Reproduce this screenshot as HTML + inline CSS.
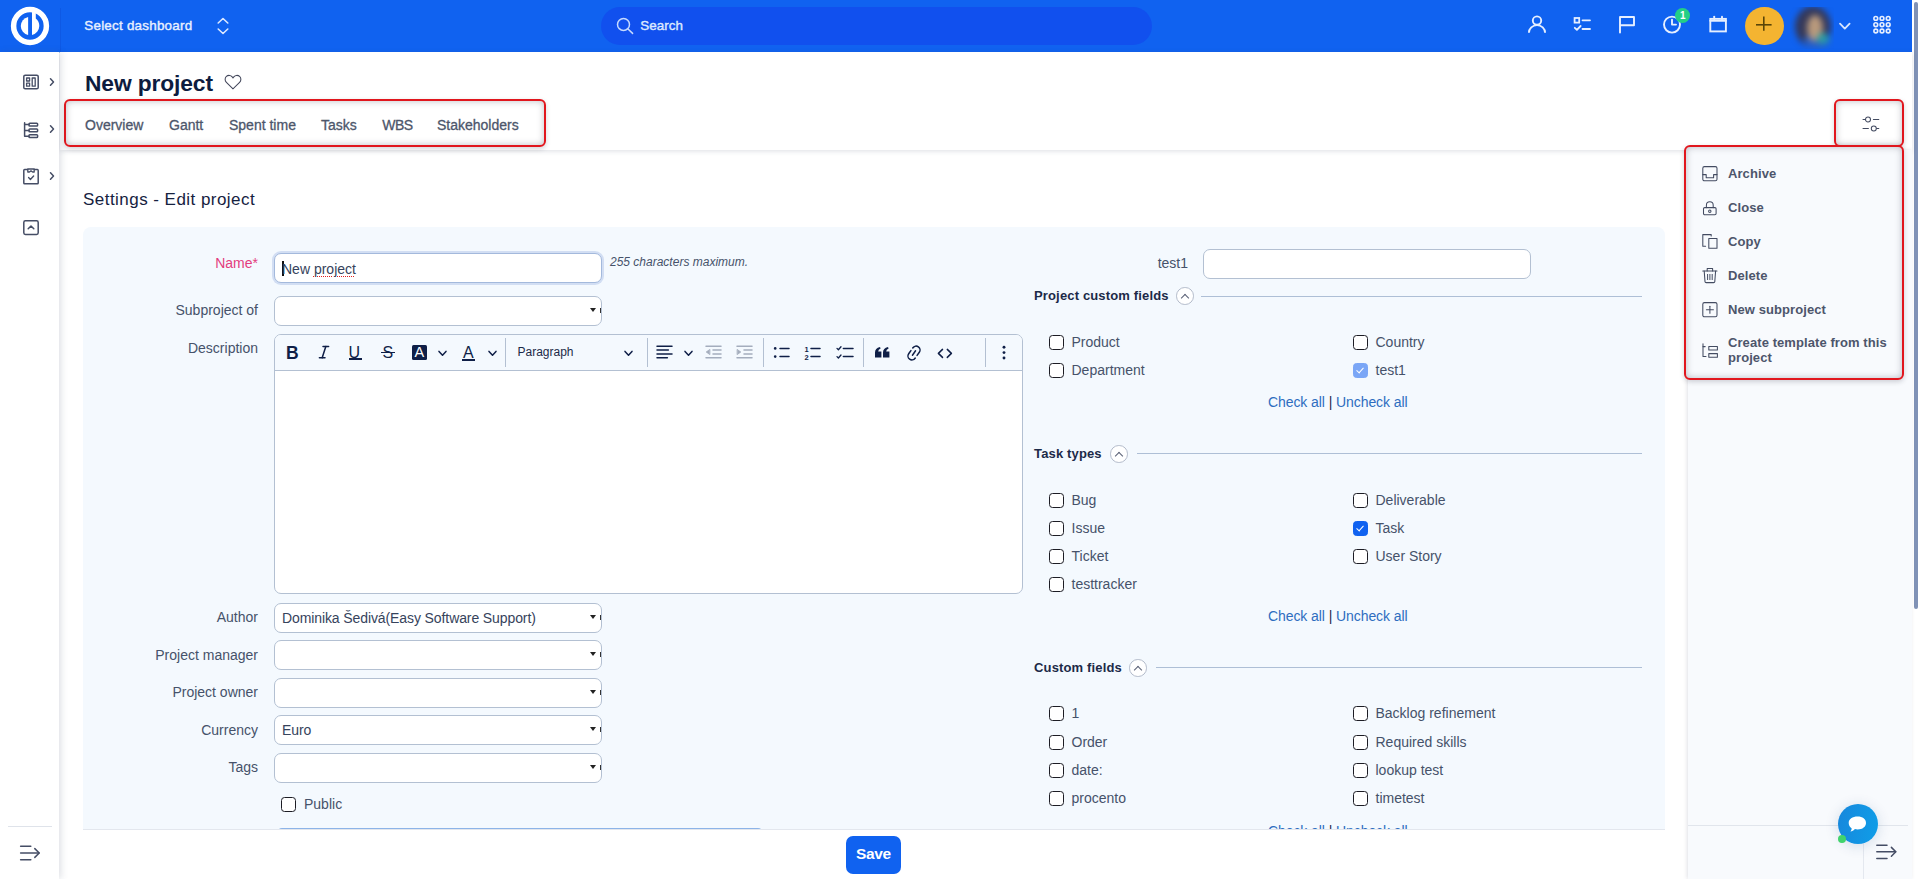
<!DOCTYPE html>
<html lang="en">
<head>
<meta charset="utf-8">
<title>New project - Settings</title>
<style>
*{box-sizing:border-box;margin:0;padding:0}
html,body{width:1920px;height:879px;overflow:hidden;background:#fff;font-family:"Liberation Sans",sans-serif;color:#46526a;font-size:14px}
.abs{position:absolute}
svg{position:absolute;overflow:visible}
.t{position:absolute;white-space:nowrap;line-height:1}
/* top bar */
#top{position:absolute;left:0;top:0;width:1912px;height:52px;background:#1062f0}
#top .div{position:absolute;left:60px;top:8px;width:1px;height:44px;background:rgba(10,60,190,.22)}
#search{position:absolute;left:601px;top:7px;width:551px;height:38px;border-radius:19px;background:#1150ee}
.w{color:#fff}
/* sidebar */
#side{position:absolute;left:0;top:52px;width:59px;height:827px;background:#fff;box-shadow:2px 0 7px rgba(60,70,100,.17)}
/* header */
#head{position:absolute;left:60px;top:52px;width:1852px;height:98px;background:#fff;box-shadow:0 1px 5px rgba(60,70,100,.18)}
.tab{position:absolute;top:118px;font-size:14px;color:#4d566b;white-space:nowrap;line-height:1;-webkit-text-stroke:.3px #4d566b}
.red{position:absolute;border:2.2px solid #e1161d;border-radius:6px;box-shadow:0 2px 5px rgba(40,40,60,.2),inset 0 0 7px rgba(40,40,60,.3)}

#avatar{overflow:hidden}
#avatar i{position:absolute;display:block;border-radius:50%}
#avatar .bl{position:absolute;left:0;top:0;width:100%;height:100%;filter:blur(3.2px)}
.sic{fill:none;stroke:#454d65;stroke-width:1.5;stroke-linecap:round;stroke-linejoin:round}

/* right panel */
#rp{position:absolute;left:1688px;top:150px;width:224px;height:729px;background:#f8fafd;box-shadow:-1px 0 4px rgba(60,70,100,.16)}
.mi{position:absolute;left:1728px;font-size:13px;font-weight:bold;color:#4d556b;white-space:nowrap;line-height:15px;letter-spacing:.08px}
.mic{fill:none;stroke:#434b61;stroke-width:1.05;stroke-linecap:round;stroke-linejoin:round}
/* form */
#h2{left:83px;top:190.6px;font-size:17px;letter-spacing:.46px;color:#16223f}
#panel{position:absolute;left:83px;top:227px;width:1582px;height:640px;background:#f4f9fe;border-radius:8px}
.lbl{position:absolute;width:180px;text-align:right;font-size:14px;color:#46526a;white-space:nowrap;line-height:16px;left:78px}
.inp{position:absolute;left:274px;width:328px;height:30px;border:1px solid #b3c0d2;border-radius:7px;background:#fff;font-size:14px;color:#36435c;line-height:28px;padding-left:7px;white-space:nowrap;overflow:hidden;letter-spacing:-.1px}
.inp:after{content:"";position:absolute;right:5.4px;top:11px;border:3px solid transparent;border-top:4px solid #222;border-bottom:0}
.inp b{position:absolute;right:0;top:11px;width:1.2px;height:4.6px;background:#333}
.cb{position:absolute;width:15px;height:15px;border:1.5px solid #1c1c24;border-radius:3.5px;background:#fff}
.cl{position:absolute;font-size:14px;color:#46526a;white-space:nowrap;line-height:16px}
.sec{position:absolute;left:1034px;letter-spacing:.15px;font-size:13px;font-weight:bold;color:#1c2a48;white-space:nowrap;line-height:15px}
.tog{position:absolute;width:17.6px;height:17.6px;margin-left:-.4px;border:1px solid #b4bccb;border-radius:50%;background:#fff}
.tog:after{content:"";position:absolute;left:5.3px;top:7.2px;width:5px;height:5px;border-left:1px solid #596075;border-top:1px solid #596075;transform:rotate(45deg)}
.ln{position:absolute;height:1px;background:#aebfd6}
.ca{position:absolute;left:1268px;letter-spacing:-.08px;font-size:14px;color:#2e6dc0;white-space:nowrap;line-height:16px}
.ca i{font-style:normal;color:#1c2a48}
#bottom{position:absolute;left:83px;top:829px;width:1582px;height:50px;background:#fff;border-top:1px solid #e3e7ee}
#save{position:absolute;left:846px;top:836px;width:55px;height:37.5px;border-radius:7px;background:#1062f0;color:#fff;font-size:15.5px;letter-spacing:-.35px;font-weight:bold;text-align:center;line-height:36px}

.ck{background:#1062f0;border-color:#1062f0}
.ck.dis{background:#7aa6f6;border-color:#7aa6f6}
.ck:after{content:"";position:absolute;left:4px;top:1.8px;width:3.2px;height:6px;border-right:1.8px solid #fff;border-bottom:1.8px solid #fff;transform:rotate(42deg)}
.tb{fill:none;stroke:#0f1f47;stroke-width:1.5;stroke-linecap:round;stroke-linejoin:round}
.tb.g{stroke:#a4adbd}
.tsep{position:absolute;top:338px;width:1px;height:29px;background:#b3c0d2}
.tt{position:absolute;white-space:nowrap;color:#0f1f47;line-height:1}
/* scrollbar */
#sb{position:absolute;left:1912px;top:0;width:8px;height:879px;background:#fff}
#sb i{position:absolute;left:2px;top:2px;width:4px;height:607px;border-radius:2px;background:#8092b6}
</style>
</head>
<body>
<!-- TOP BAR -->
<div id="top">
  <svg style="left:8px;top:4px" width="44" height="44" viewBox="8 4 44 44">
    <circle cx="30" cy="26" r="16.4" fill="none" stroke="#fff" stroke-width="5.5"/>
    <path d="M28.1 17 A9.2 9.2 0 0 0 28.1 35 Z" fill="#fff"/>
    <path d="M32 11.5 L35.8 11.5 L35.8 18.6 Q39.3 21.6 39.3 26 A9.3 9.3 0 0 1 32 34.9 Z" fill="#fff"/>
  </svg>
  <div class="div"></div>
  <div class="t w" id="seldash" style="left:84.3px;top:19px;font-size:13.4px;letter-spacing:.24px;-webkit-text-stroke:.4px #e9f0ff;color:#e9f0ff">Select dashboard</div>
  <svg style="left:217px;top:17px" width="12" height="18" viewBox="0 0 12 18" fill="none" stroke="#dce8ff" stroke-width="1.6" stroke-linecap="round" stroke-linejoin="round"><path d="M1.2 6 L6 1.5 L10.8 6"/><path d="M1.2 12 L6 16.5 L10.8 12"/></svg>
  <div id="search">
    <svg style="left:15px;top:10px" width="18" height="18" viewBox="0 0 18 18" fill="none" stroke="#c6daff" stroke-width="1.5" stroke-linecap="round"><circle cx="7.5" cy="7.4" r="6"/><path d="M12 12 L16.6 16.4"/></svg>
    <div class="t" id="searcht" style="left:39.2px;top:12px;font-size:13.4px;letter-spacing:.05px;-webkit-text-stroke:.4px #dde9ff;color:#dde9ff">Search</div>
  </div>

  <!-- top right icons -->
  <svg style="left:1526px;top:14px" width="22" height="22" viewBox="0 0 22 22" fill="none" stroke="#e6efff" stroke-width="1.9" stroke-linecap="round"><circle cx="11" cy="6.6" r="4.2"/><path d="M2.9 18.8 A8.1 7.7 0 0 1 19.1 18.8" stroke-linecap="butt"/></svg>
  <svg style="left:1572px;top:15px" width="20" height="18" viewBox="0 0 20 18" fill="none" stroke="#e6efff" stroke-width="1.8" stroke-linecap="round" stroke-linejoin="round"><rect x="2.6" y="3" width="4.6" height="4.6" stroke-linejoin="miter"/><path d="M10.5 5.3 H18"/><path d="M2.8 12.8 L4.9 14.8 L8.6 11"/><path d="M10.5 14 H18"/></svg>
  <svg style="left:1617px;top:14px" width="20" height="20" viewBox="0 0 20 20" fill="none" stroke="#e6efff" stroke-width="1.9" stroke-linecap="round" stroke-linejoin="round"><path d="M3 18.5 V3 H17 V11.3 H3"/></svg>
  <svg style="left:1661px;top:14px" width="22" height="22" viewBox="0 0 22 22" fill="none" stroke="#e6efff" stroke-width="1.9" stroke-linecap="round" stroke-linejoin="round"><circle cx="11" cy="10.6" r="8"/><path d="M11 5.6 V10.6 H15"/></svg>
  <div class="abs" style="left:1675px;top:8px;width:15px;height:15px;border-radius:50%;background:#23cf86"></div>
  <div class="t" style="left:1680px;top:10.5px;font-size:10px;font-weight:bold;color:#fff">1</div>
  <svg style="left:1708px;top:14px" width="20" height="20" viewBox="0 0 20 20" fill="none" stroke="#e6efff" stroke-width="1.9" stroke-linecap="round" stroke-linejoin="round"><rect x="2.3" y="4.9" width="15.6" height="12.5" stroke-linejoin="miter"/><path d="M2.3 6.7 H17.9"/><path d="M6.2 2.6 V5"/><path d="M14 2.6 V5"/></svg>
  <div class="abs" style="left:1745px;top:6.5px;width:38.5px;height:38.5px;border-radius:50%;background:#f4b431"></div>
  <svg style="left:1755.2px;top:16px" width="18" height="18" viewBox="0 0 18 18" fill="none" stroke="#5a4508" stroke-width="1.6"><path d="M1 8.8 H16.6"/><path d="M8.8 0.4 V14.8"/></svg>
  <div class="abs" id="avatar" style="left:1790px;top:6.5px;width:43.5px;height:42px"><div class="bl"><i style="left:5px;top:-1px;width:36px;height:41px;background:#343859"></i><i style="left:14px;top:26px;width:26px;height:15px;background:#2a5fc0"></i><i style="left:17px;top:8.5px;width:16px;height:26px;background:#b8997c"></i><i style="left:27px;top:26px;width:12px;height:11px;background:#2a9ca4"></i></div></div>
  <svg style="left:1838px;top:21px" width="14" height="10" viewBox="0 0 14 10" fill="none" stroke="#d8e6ff" stroke-width="1.8" stroke-linecap="round" stroke-linejoin="round"><path d="M2 2.6 L6.8 7.6 L11.6 2.6"/></svg>
  <svg style="left:1872px;top:15px" width="20" height="20" viewBox="0 0 20 20" fill="none" stroke="#e6efff" stroke-width="1.6"><circle cx="3.8" cy="3.4" r="1.9"/><circle cx="10" cy="3.4" r="1.9"/><circle cx="16.2" cy="3.4" r="1.9"/><circle cx="3.8" cy="9.7" r="1.9"/><circle cx="10" cy="9.7" r="1.9"/><circle cx="16.2" cy="9.7" r="1.9"/><circle cx="3.8" cy="16" r="1.9"/><circle cx="10" cy="16" r="1.9"/><circle cx="16.2" cy="16" r="1.9"/></svg>
</div>
<div class="abs" style="left:0;top:52px;width:1912px;height:1px;background:rgba(16,98,240,.32)"></div>
<div id="sb"><i></i></div>

<!-- HEADER -->
<div id="head"></div>
<div class="t" id="title" style="left:85px;top:72px;font-size:22.8px;font-weight:bold;letter-spacing:-.12px;color:#0d1c40">New project</div>
<svg style="left:223.5px;top:73.8px" width="18" height="16" viewBox="0 0 18 16" fill="none" stroke="#42465a" stroke-width="1.05" stroke-linejoin="miter"><path d="M9 14.8 L2.4 8.4 C0.6 6.6 0.8 3.8 2.4 2.4 C4.2 0.8 6.8 1.2 8.2 2.8 L9 3.8 L9.8 2.8 C11.2 1.2 13.8 0.8 15.6 2.4 C17.2 3.8 17.4 6.6 15.6 8.4 Z"/></svg>
<div class="red" style="left:64.3px;top:99px;width:481.6px;height:48.4px"></div>
<div class="tab" style="left:85px">Overview</div>
<div class="tab" style="left:169px">Gantt</div>
<div class="tab" style="left:229px">Spent time</div>
<div class="tab" style="left:321px">Tasks</div>
<div class="tab" style="left:382.3px;letter-spacing:-.6px">WBS</div>
<div class="tab" style="left:437px">Stakeholders</div>


<!-- MAIN FORM -->
<div class="t" id="h2">Settings - Edit project</div>
<div id="panel"></div>
<div class="lbl" style="top:255.4px;color:#e33d7e">Name*</div>
<div class="abs" id="nameinp" style="left:274px;top:253px;width:328px;height:30px;border:1px solid #a3b9dc;border-radius:7px;background:#fff;box-shadow:0 0 0 2px #d2def3"></div>
<div class="abs" style="left:282px;top:261px;width:1.5px;height:15px;background:#111"></div>
<div class="t" id="nameval" style="left:282px;top:261px;font-size:14px;color:#36435c;line-height:16px">New <span style="text-decoration:underline dotted #e02020 1px;text-underline-offset:2px">project</span></div>
<div class="t" id="maxc" style="left:610px;top:256px;font-size:12px;font-style:italic;color:#46526a;line-height:13px">255 characters maximum.</div>
<div class="lbl" style="top:302px">Subproject of</div>
<div class="inp" style="top:296px"><b></b></div>
<div class="lbl" style="top:340px">Description</div>
<div class="abs" id="editor" style="left:274px;top:334px;width:749px;height:260px;border:1px solid #b3c0d2;border-radius:7px;background:#fff;overflow:hidden"><div style="height:36px;background:#f4f9fe;border-bottom:1px solid #b3c0d2"></div></div>

<!-- editor toolbar -->
<div class="tt" style="left:286px;top:344.6px;font-size:17.5px;font-weight:bold">B</div>
<svg class="tb" style="left:318px;top:345px" width="12" height="14" viewBox="0 0 12 14" stroke-width="1.6"><path d="M5 1.4 H10.6"/><path d="M1.4 12.8 H7"/><path d="M7.8 1.4 L4.2 12.8"/></svg>
<div class="tt" style="left:348.5px;top:344.8px;font-size:16px">U</div>
<div class="abs" style="left:348.5px;top:358.4px;width:13.5px;height:1.5px;background:#0f1f47"></div>
<div class="tt" style="left:382.5px;top:345.2px;font-size:16px">S</div>
<div class="abs" style="left:381px;top:351.7px;width:13.5px;height:1.5px;background:#0f1f47"></div>
<div class="abs" style="left:412px;top:345px;width:15px;height:15px;border-radius:1.5px;background:#0f1f47"></div>
<div class="tt" style="left:414.6px;top:345px;font-size:14.5px;color:#fff">A</div>
<svg class="tb" style="left:438px;top:349.5px" width="9" height="7" viewBox="0 0 9 7" stroke-width="1.7"><path d="M1 1.4 L4.5 5.2 L8 1.4"/></svg>
<div class="tt" style="left:463px;top:345px;font-size:16px">A</div>
<div class="abs" style="left:461.5px;top:359px;width:13.5px;height:1.5px;background:#0f1f47"></div>
<svg class="tb" style="left:488.3px;top:349.5px" width="9" height="7" viewBox="0 0 9 7" stroke-width="1.7"><path d="M1 1.4 L4.5 5.2 L8 1.4"/></svg>
<div class="tsep" style="left:504.5px"></div>
<div class="tt" id="para" style="left:517.5px;top:345.5px;font-size:12px;color:#1c2a48">Paragraph</div>
<svg class="tb" style="left:624.3px;top:349.5px" width="9" height="7" viewBox="0 0 9 7" stroke-width="1.7"><path d="M1 1.4 L4.5 5.2 L8 1.4"/></svg>
<div class="tsep" style="left:646.5px"></div>
<svg class="tb" style="left:656px;top:345px" width="17" height="14" viewBox="0 0 17 14"><path d="M1 1.3 H16"/><path d="M1 5.1 H12.4"/><path d="M1 8.9 H16"/><path d="M1 12.7 H11.4"/></svg>
<svg class="tb" style="left:684.3px;top:349.5px" width="9" height="7" viewBox="0 0 9 7" stroke-width="1.7"><path d="M1 1.4 L4.5 5.2 L8 1.4"/></svg>
<svg class="tb g" style="left:704.5px;top:345px" width="17" height="14" viewBox="0 0 17 14"><path d="M1 1.3 H16"/><path d="M8 5.1 H16"/><path d="M8 8.9 H16"/><path d="M1 12.7 H16"/><path d="M4.6 4.6 L1.2 7 L4.6 9.4 Z" fill="#a4adbd" stroke-width=".8"/></svg>
<svg class="tb g" style="left:736px;top:345px" width="17" height="14" viewBox="0 0 17 14"><path d="M1 1.3 H16"/><path d="M8 5.1 H16"/><path d="M8 8.9 H16"/><path d="M1 12.7 H16"/><path d="M1.4 4.6 L4.8 7 L1.4 9.4 Z" fill="#a4adbd" stroke-width=".8"/></svg>
<div class="tsep" style="left:763px"></div>
<svg class="tb" style="left:772.5px;top:345px" width="17" height="15" viewBox="0 0 17 15"><circle cx="2.2" cy="3.4" r="1.3" fill="#0f1f47" stroke="none"/><circle cx="2.2" cy="11.6" r="1.3" fill="#0f1f47" stroke="none"/><path d="M7 3.4 H16"/><path d="M7 11.6 H16"/></svg>
<svg class="tb" style="left:804px;top:345px" width="17" height="15" viewBox="0 0 17 15"><path d="M7 3.4 H16"/><path d="M7 11.6 H16"/></svg>
<div class="tt" style="left:804.5px;top:345.5px;font-size:7.5px;font-weight:bold">1</div>
<div class="tt" style="left:804.5px;top:354px;font-size:7.5px;font-weight:bold">2</div>
<svg class="tb" style="left:836px;top:345px" width="18" height="15" viewBox="0 0 18 15"><path d="M7.4 3.4 H17"/><path d="M7.4 11.6 H17"/><path d="M1 3.4 L2.4 4.8 L5 1.8" stroke-width="1.3"/><path d="M1 11.6 L2.4 13 L5 10" stroke-width="1.3"/></svg>
<div class="tsep" style="left:863px"></div>
<svg style="left:874.5px;top:347px" width="15" height="11" viewBox="0 0 15 11" fill="#0f1f47"><path d="M0 10.4 V5.6 Q0 1 5 0 L5.6 1.4 Q3.2 2.4 3.2 4.6 H6.4 V10.4 Z"/><path d="M8 10.4 V5.6 Q8 1 13 0 L13.6 1.4 Q11.2 2.4 11.2 4.6 H14.4 V10.4 Z"/></svg>
<svg class="tb" style="left:905.5px;top:344.5px" width="16" height="16" viewBox="-8 -8 16 16" stroke-width="1.55"><g transform="rotate(35)"><path d="M-3.9 -3.4 V-3.7 A3.9 3.9 0 0 1 3.9 -3.7 V0.2"/><path d="M3.9 3.4 V3.7 A3.9 3.9 0 0 1 -3.9 3.7 V-0.2"/><path d="M0 -2.7 V2.7"/></g></svg>
<svg class="tb" style="left:936.5px;top:347.5px" width="16" height="11" viewBox="0 0 16 11" stroke-width="1.7" stroke-linejoin="miter"><path d="M5.5 1.4 L1.4 5.4 L5.5 9.4"/><path d="M10.3 1.4 L14.4 5.4 L10.3 9.4"/></svg>
<div class="tsep" style="left:985px"></div>
<svg style="left:1002px;top:345px" width="4" height="16" viewBox="0 0 4 16" fill="#0f1f47"><circle cx="2" cy="2.2" r="1.45"/><circle cx="2" cy="7.6" r="1.45"/><circle cx="2" cy="13" r="1.45"/></svg>
<div class="lbl" style="top:609px">Author</div>
<div class="inp" style="top:603px">Dominika Šedivá(Easy Software Support)<b></b></div>
<div class="lbl" style="top:647px">Project manager</div>
<div class="inp" style="top:640px"><b></b></div>
<div class="lbl" style="top:684px">Project owner</div>
<div class="inp" style="top:678px"><b></b></div>
<div class="lbl" style="top:722px">Currency</div>
<div class="inp" style="top:715px">Euro<b></b></div>
<div class="lbl" style="top:759px">Tags</div>
<div class="inp" style="top:753px"><b></b></div>
<div class="cb" style="left:281px;top:797px"></div>
<div class="cl" style="left:304px;top:796px">Public</div>
<div class="abs" style="left:278px;top:827.5px;width:484px;height:4px;border-top:1.5px solid #8db4e8;border-radius:6px 6px 0 0"></div>

<!-- right column -->
<div class="lbl" style="left:1008px;top:255px">test1</div>
<div class="abs" style="left:1203px;top:249px;width:328px;height:30px;border:1px solid #b3c0d2;border-radius:7px;background:#fff"></div>

<div class="sec" style="top:288px">Project custom fields</div>
<div class="tog" style="left:1176.5px;top:287px"></div>
<div class="ln" style="left:1201px;top:295.5px;width:441px"></div>
<div class="cb" style="left:1049px;top:335px"></div><div class="cl" style="left:1071.5px;top:334px">Product</div>
<div class="cb" style="left:1049px;top:363px"></div><div class="cl" style="left:1071.5px;top:362px">Department</div>
<div class="cb" style="left:1353px;top:335px"></div><div class="cl" style="left:1375.5px;top:334px">Country</div>
<div class="cb ck dis" style="left:1353px;top:363px"></div><div class="cl" style="left:1375.5px;top:362px">test1</div>
<div class="ca" style="top:394px">Check all <i>|</i> Uncheck all</div>

<div class="sec" style="top:446px">Task types</div>
<div class="tog" style="left:1110.5px;top:445px"></div>
<div class="ln" style="left:1137px;top:453px;width:505px"></div>
<div class="cb" style="left:1049px;top:493px"></div><div class="cl" style="left:1071.5px;top:492px">Bug</div>
<div class="cb" style="left:1049px;top:521px"></div><div class="cl" style="left:1071.5px;top:520px">Issue</div>
<div class="cb" style="left:1049px;top:549px"></div><div class="cl" style="left:1071.5px;top:548px">Ticket</div>
<div class="cb" style="left:1049px;top:577px"></div><div class="cl" style="left:1071.5px;top:576px">testtracker</div>
<div class="cb" style="left:1353px;top:493px"></div><div class="cl" style="left:1375.5px;top:492px">Deliverable</div>
<div class="cb ck" style="left:1353px;top:521px"></div><div class="cl" style="left:1375.5px;top:520px">Task</div>
<div class="cb" style="left:1353px;top:549px"></div><div class="cl" style="left:1375.5px;top:548px">User Story</div>
<div class="ca" style="top:608px">Check all <i>|</i> Uncheck all</div>

<div class="sec" style="top:660px">Custom fields</div>
<div class="tog" style="left:1129.5px;top:659px"></div>
<div class="ln" style="left:1156px;top:667px;width:486px"></div>
<div class="cb" style="left:1049px;top:706px"></div><div class="cl" style="left:1071.5px;top:705px">1</div>
<div class="cb" style="left:1049px;top:735px"></div><div class="cl" style="left:1071.5px;top:734px">Order</div>
<div class="cb" style="left:1049px;top:763px"></div><div class="cl" style="left:1071.5px;top:762px">date:</div>
<div class="cb" style="left:1049px;top:791px"></div><div class="cl" style="left:1071.5px;top:790px">procento</div>
<div class="cb" style="left:1353px;top:706px"></div><div class="cl" style="left:1375.5px;top:705px">Backlog refinement</div>
<div class="cb" style="left:1353px;top:735px"></div><div class="cl" style="left:1375.5px;top:734px">Required skills</div>
<div class="cb" style="left:1353px;top:763px"></div><div class="cl" style="left:1375.5px;top:762px">lookup test</div>
<div class="cb" style="left:1353px;top:791px"></div><div class="cl" style="left:1375.5px;top:790px">timetest</div>
<div class="ca" style="top:823.4px">Check all <i>|</i> Uncheck all</div>

<div id="bottom"></div>
<div id="save">Save</div>

<!-- RIGHT PANEL -->
<div id="rp"></div>
<div class="red" style="left:1834px;top:99px;width:70px;height:48px;background:#fff"></div>
<div class="red" id="menubox" style="left:1684px;top:145.4px;width:220.3px;height:235px;background:#f8fafd"></div>

<svg class="mic" style="left:1862px;top:115px" width="18" height="17" viewBox="0 0 18 17" stroke="#3e4458" stroke-width="1.1"><path d="M1 4.4 H3.2"/><circle cx="6" cy="4.4" r="2.5"/><path d="M11.4 4.4 H16.8"/><path d="M1 13.4 H6.4"/><circle cx="11.8" cy="13.4" r="2.5"/><path d="M14.6 13.4 H16.8"/></svg>
<svg class="mic" style="left:1702px;top:166px" width="16" height="16" viewBox="0 0 16 16"><rect x="0.8" y="0.6" width="14.2" height="14.2" rx="1.6"/><path d="M0.8 8.6 H4.2 V11.8 H11.6 V8.6 H15"/></svg>
<svg class="mic" style="left:1702px;top:200px" width="16" height="16" viewBox="0 0 16 16"><rect x="1.5" y="7.6" width="12.6" height="7.2" rx="1.2"/><path d="M4.4 7.6 V5.2 A3.4 3.4 0 0 1 11.2 5.2 V7.6"/><circle cx="7.8" cy="11.2" r="1.2"/></svg>
<svg class="mic" style="left:1702px;top:234px" width="16" height="16" viewBox="0 0 16 16"><path d="M3.6 12.2 H0.8 V0.6 H9.2 V2"/><rect x="6.8" y="4.4" width="8.2" height="9.8"/></svg>
<svg class="mic" style="left:1702px;top:267px" width="16" height="17" viewBox="0 0 16 17"><path d="M0.8 4 H15"/><path d="M5.2 4 V1.4 H10.6 V4"/><path d="M2.2 4 L3 14.6 Q3.1 15.6 4.2 15.6 H11.6 Q12.7 15.6 12.8 14.6 L13.6 4"/><path d="M5.6 7.4 V12.6" stroke-width="1"/><path d="M7.9 7.4 V12.6" stroke-width="1"/><path d="M10.2 7.4 V12.6" stroke-width="1"/></svg>
<svg class="mic" style="left:1702px;top:302px" width="16" height="16" viewBox="0 0 16 16"><rect x="0.8" y="0.6" width="14.2" height="14.2" rx="1.6"/><path d="M4.4 7.7 H11.4"/><path d="M7.9 4.2 V11.2"/></svg>
<svg class="mic" style="left:1702px;top:343px" width="17" height="16" viewBox="0 0 17 16"><path d="M1 0.8 V13.4 H4"/><path d="M1 3.6 H3.2"/><rect x="6.8" y="3.4" width="8.6" height="3.6"/><rect x="6.8" y="10.6" width="8.6" height="3.6"/></svg>
<div class="mi" style="top:166px">Archive</div>
<div class="mi" style="top:200px">Close</div>
<div class="mi" style="top:234px">Copy</div>
<div class="mi" style="top:268px">Delete</div>
<div class="mi" style="top:302px">New subproject</div>
<div class="mi" style="top:335px">Create template from this<br>project</div>

<div class="abs" style="left:1688px;top:825px;width:220px;height:1px;background:#e1e5ec"></div>
<div class="abs" style="left:1862.5px;top:826px;width:1px;height:53px;background:#e4e8ef"></div>
<svg class="sic" style="left:1875.6px;top:844.4px" width="21" height="16" viewBox="0 0 21 16" stroke-width="1.2" stroke="#555b70"><path d="M0.8 1.2 H11"/><path d="M0.8 7.8 H19.6"/><path d="M0.8 14.4 H11"/><path d="M15.4 3.4 L19.8 7.8 L15.4 12.2"/></svg>
<div class="abs" style="left:1837.7px;top:804.2px;width:40px;height:40px;border-radius:50%;background:linear-gradient(100deg,#1787dc,#0f9ee8);box-shadow:0 2px 14px rgba(20,60,120,.16)"></div>
<svg style="left:1847px;top:815px" width="21" height="18" viewBox="0 0 21 18" fill="#fff"><path d="M10.6 1.6 C15.6 1.6 19 4.2 19 8 C19 11.8 15.6 14.4 10.6 14.4 C9.6 14.4 8.7 14.3 7.9 14.1 C6.7 15.6 5.2 16.5 3.4 16.6 C4.3 15.5 4.7 14.3 4.6 13.2 C2.8 12 1.7 10.2 1.7 8 C1.7 4.2 5.4 1.6 10.6 1.6 Z"/></svg>
<div class="abs" style="left:1838.3px;top:835.4px;width:8px;height:8px;border-radius:50%;background:#41d36c"></div>

<!-- SIDEBAR -->
<div id="side">
  <svg class="sic" style="left:23px;top:22px" width="16" height="16" viewBox="0 0 16 16"><rect x="0.8" y="1.2" width="14.4" height="13.6" rx="1.4"/><rect x="3.6" y="4" width="3" height="3" stroke-width="1.3"/><rect x="3.6" y="9.2" width="3" height="3" stroke-width="1.3"/><rect x="9.2" y="4" width="3" height="8.2" stroke-width="1.3"/></svg>
  <svg class="sic" style="left:49px;top:25px" width="6" height="10" viewBox="0 0 6 10" stroke-width="1" stroke="#8a90a2"><path d="M1.5 1.8 L4.5 5 L1.5 8.2"/></svg>
  <svg class="sic" style="left:23px;top:69.6px" width="16" height="17" viewBox="0 0 16 17"><path d="M1.6 0.8 V14.2 H6"/><path d="M1.6 2.6 H6"/><path d="M1.6 8.4 H6"/><rect x="6" y="1.2" width="8.6" height="2.8" rx=".8"/><rect x="6" y="7" width="8.6" height="2.8" rx=".8"/><rect x="6" y="12.8" width="8.6" height="2.8" rx=".8"/></svg>
  <svg class="sic" style="left:49px;top:72px" width="6" height="10" viewBox="0 0 6 10" stroke-width="1" stroke="#8a90a2"><path d="M1.5 1.8 L4.5 5 L1.5 8.2"/></svg>
  <svg class="sic" style="left:23px;top:115.4px" width="16" height="18" viewBox="0 0 16 18"><path d="M4.6 2.6 H1.6 Q0.8 2.6 0.8 3.4 V16 Q0.8 16.8 1.6 16.8 H14.4 Q15.2 16.8 15.2 16 V3.4 Q15.2 2.6 14.4 2.6 H11.4"/><path d="M4.8 2 H11.2 V5 H9.6 L8 3.9 L6.4 5 H4.8 Z" stroke-width="1.3"/><path d="M5.6 10.6 L7.4 12.4 L10.6 9" stroke-width="1.4"/></svg>
  <svg class="sic" style="left:49px;top:119px" width="6" height="10" viewBox="0 0 6 10" stroke-width="1" stroke="#8a90a2"><path d="M1.5 1.8 L4.5 5 L1.5 8.2"/></svg>
  <svg class="sic" style="left:23px;top:168px" width="16" height="16" viewBox="0 0 16 16"><rect x="0.8" y="0.8" width="14.4" height="13.6" rx="1.6"/><path d="M5.2 8.8 L8 6 L10.8 8.8"/></svg>
  <div class="abs" style="left:8px;top:773.5px;width:44px;height:1px;background:#dfe3ea"></div>
  <svg class="sic" style="left:20px;top:793px" width="20" height="16" viewBox="0 0 20 16" stroke-width="1.2" stroke="#555b70"><path d="M0.6 1.2 H10.8"/><path d="M0.6 8 H19"/><path d="M0.6 14.8 H10.8"/><path d="M14.8 3.6 L19.2 8 L14.8 12.4"/></svg>
</div>

</body>
</html>
